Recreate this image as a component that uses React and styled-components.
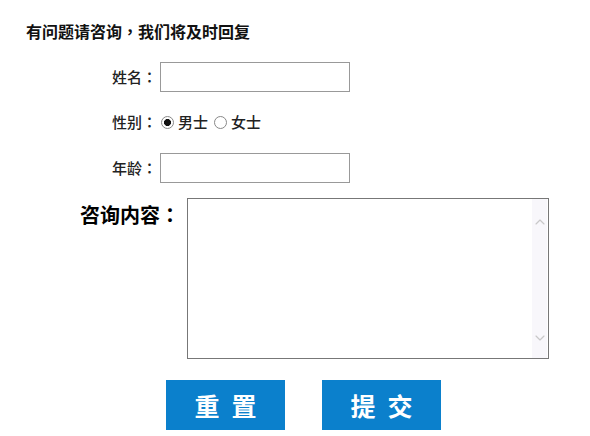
import React from "react";
import styled, { createGlobalStyle } from "styled-components";
import { ChevronUp, ChevronDown } from "lucide-react";

const Global = createGlobalStyle`
  html, body { margin: 0; padding: 0; background: #fff; }
  body { font-family: "Microsoft YaHei", "Noto Sans CJK SC", "Noto Sans", sans-serif; }
  * { box-sizing: border-box; }
`;

const Page = styled.div`
  width: 590px;
  height: 436px;
  padding: 21px 0 0 26px;
  overflow: hidden;
`;

const Title = styled.h1`
  margin: 0;
  font-size: 16px;
  line-height: 20px;
  font-weight: 700;
  color: #111;
`;

const Punct = styled.span`
  font-family: "Noto Sans CJK TC", "Noto Sans CJK SC", sans-serif;
`;

const Form = styled.form`
  display: flex;
  flex-direction: column;
  gap: 15px;
  margin-top: 21px;
`;

const Row = styled.div`
  display: flex;
  align-items: ${(p) => (p.$top ? "flex-start" : "center")};
  height: ${(p) => (p.$top ? "auto" : "30px")};
  padding-left: ${(p) => p.$indent}px;
  margin-top: ${(p) => p.$shift || 0}px;
`;

const Label = styled.label`
  font-size: 15px;
  line-height: 30px;
  font-weight: 500;
  color: #222;
  margin-right: 3px;
  white-space: nowrap;
`;

const BigLabel = styled.label`
  font-size: 20px;
  line-height: 30px;
  font-weight: 700;
  color: #000;
  padding-top: 2px;
  margin-right: 7px;
  white-space: nowrap;
`;

const TextInput = styled.input`
  width: 190px;
  height: 30px;
  border: 1px solid #999;
  padding: 0 4px;
  font-size: 14px;
  outline: none;
  background: #fff;
`;

const Radio = styled.input.attrs({ type: "radio" })`
  appearance: none;
  -webkit-appearance: none;
  margin: 0 4px 0 1px;
  width: 13px;
  height: 13px;
  border: 1px solid #888;
  border-radius: 50%;
  background: #fff;
  display: inline-block;
  &:checked {
    background: radial-gradient(circle, #111 0 3.2px, #fff 3.8px);
  }
`;

const RadioText = styled.span`
  font-size: 15px;
  line-height: 30px;
  font-weight: 500;
  color: #222;
  margin-right: 5px;
`;

const AreaBox = styled.div`
  display: flex;
  width: 362px;
  height: 161px;
  border: 1px solid #777;
  padding-right: 1px;
  background: #fff;
`;

const Area = styled.textarea`
  flex: 1;
  border: none;
  outline: none;
  resize: none;
  font-size: 14px;
  padding: 4px;
  overflow: hidden;
`;

const Track = styled.div`
  width: 15px;
  background: #f8f7fb;
  display: flex;
  flex-direction: column;
  justify-content: space-between;
  align-items: center;
  padding: 15px 0 12px;
  color: #c8c8c8;
`;

const Buttons = styled.div`
  display: flex;
  gap: 37px;
  padding-left: 140px;
  margin-top: 6px;
`;

const Button = styled.button`
  width: 119px;
  height: 50px;
  border: none;
  background: #0b80cc;
  color: #fff;
  font-family: inherit;
  font-size: 25px;
  font-weight: 700;
  letter-spacing: 12px;
  padding: 0 0 0 12px;
  cursor: pointer;
`;

const Colon = () => <Punct>：</Punct>;

export default function App() {
  return (
    <Page>
      <Global />
      <Title>
        有问题请咨询<Punct>，</Punct>我们将及时回复
      </Title>
      <Form onSubmit={(e) => e.preventDefault()}>
        <Row $indent={86}>
          <Label>
            姓名<Colon />
          </Label>
          <TextInput type="text" />
        </Row>
        <Row $indent={86}>
          <Label>
            性别<Colon />
          </Label>
          <Radio name="sex" defaultChecked />
          <RadioText>男士</RadioText>
          <Radio name="sex" />
          <RadioText>女士</RadioText>
        </Row>
        <Row $indent={86} $shift={1}>
          <Label>
            年龄<Colon />
          </Label>
          <TextInput type="text" />
        </Row>
        <Row $indent={54} $top>
          <BigLabel>
            咨询内容<Colon />
          </BigLabel>
          <AreaBox>
            <Area />
            <Track>
              <ChevronUp size={16} strokeWidth={1.75} />
              <ChevronDown size={16} strokeWidth={1.75} />
            </Track>
          </AreaBox>
        </Row>
        <Buttons>
          <Button type="reset">重置</Button>
          <Button type="submit">提交</Button>
        </Buttons>
      </Form>
    </Page>
  );
}
